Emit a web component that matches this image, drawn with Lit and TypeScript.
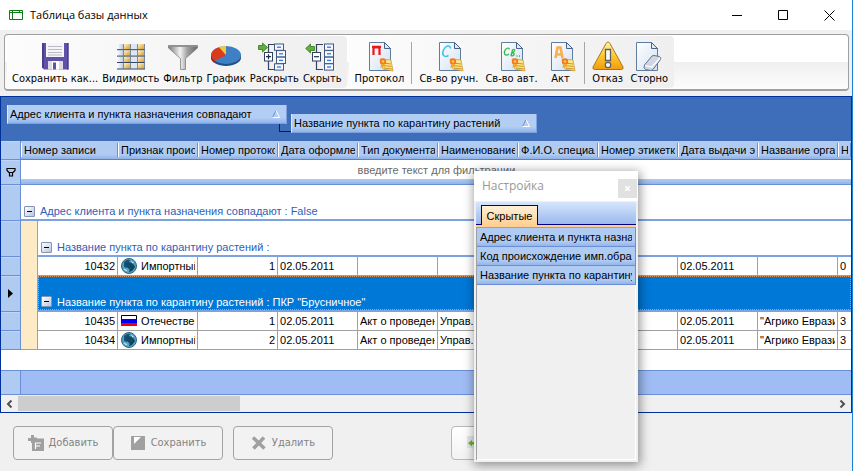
import { LitElement, html, svg, css, nothing } from "lit";
import { customElement, property } from "lit/decorators.js";
import { classMap } from "lit/directives/class-map.js";

const page = svg`<path d="M6.500 2.500H21.500L27.500 8.500V30.500H6.500Z" fill="url(#pg)" stroke="#5f7da0"/><path d="M21.500 2.500V8.500H27.500Z" fill="#dfe9f6" stroke="#4a6488"/>`;
const pageDefs = svg`<defs><linearGradient id="pg" x1="0" y1="0" x2="1" y2="1"><stop offset="0" stop-color="#fff"/><stop offset="1" stop-color="#d3e1f2"/></linearGradient></defs>`;
const seal = svg`<path d="M17 19L28 20L30 31L20 29Z" fill="#ffe88a" stroke="#c89020" stroke-width=".7"/><path d="M20 23L28 24M20 25.500L28.500 26.500M21 28L29 29" stroke="#b87e10" stroke-width=".8"/><circle cx="20" cy="21.500" r="3.200" fill="#f4791f"/><circle cx="20" cy="21.500" r="1.300" fill="#ffc860"/><path d="M18 24L17.500 28L20 26.500L21.500 28V24Z" fill="#f5a623"/>`;

const tree = (cells: number[], open: boolean) => svg`
  <path d="M17 4.500H10.500V12M10.500 21V29.500H17" fill="none" stroke="#33435e" stroke-width="1.200"/>
  ${cells.map((x, i) => svg`<rect x=${x + 0.5} y=${4 + i * 6.6} width="9" height="6.300" fill="#f4f9ff" stroke="#45597c"/><path d=${`M${x + 3} ${7.2 + i * 6.6}h4`} stroke="#2f78e8" stroke-width="1.300"/>`)}
  <rect x="6.500" y="12.500" width="8" height="8.500" fill="#fff" stroke="#33435e"/>
  <path d=${open ? "M8 16.700H13M10.500 14.200V19.200" : "M8 16.700H13"} stroke="#1c2f50" stroke-width="1.200"/>
  ${open
    ? svg`<path d="M.500 5.500H4.500V3L9.500 7.500L4.500 12V9.500H.500Z" fill="#5fb236" stroke="#38761d" stroke-width=".8"/>`
    : svg`<path d="M8.500 6.500H4.500V4L-.300 8.500L4.500 13V10.500H8.500Z" fill="#5fb236" stroke="#38761d" stroke-width=".8"/>`}`;

const icons: Record<string, unknown> = {
  save: svg`<path d="M3 3H29.500V29.500H5L3 27.500Z" fill="#5f52a8"/><path d="M3 3H5V28H3ZM28 3H29.500V29.500H28Z" fill="#493d8c"/><path d="M7 3H25V17H7Z" fill="#f6f6f8"/><path d="M9 6.500H23M9 9.500H23M9 12.500H23M9 15H23" stroke="#b9bcc6"/><path d="M9 21H24V29.500H9Z" fill="#dcdde4"/><path d="M13 21H20V29.500H13Z" fill="#fff"/><path d="M14 22.500H17V29.500H14Z" fill="#5f52a8"/>`,
  grid: svg`<defs><linearGradient id="gb"><stop offset="0" stop-color="#fff"/><stop offset="1" stop-color="#b9cbe4"/></linearGradient><linearGradient id="gy" x1="0" y1="0" x2="1" y2="1"><stop offset="0" stop-color="#fff2c8"/><stop offset="1" stop-color="#d79a26"/></linearGradient></defs>
    ${[0, 1, 2, 3].map((r) => [0, 1, 2, 3].map((c) => svg`<rect x=${2 + c * 7} y=${4 + r * 6.4} width="6.200" height="5.400" fill=${c === 0 ? "url(#gb)" : c === 2 ? "#dde6f3" : "url(#gy)"}/>`))}
    <path d="M2 9.700H30M2 16.100H30M2 22.500H30M2 29H30" stroke="#33435e"/><path d="M8.500 4V29M15.500 4V29M22.500 4V29M29.500 4V29" stroke="#60708c" stroke-width=".8"/>`,
  filter: svg`<defs><linearGradient id="fn"><stop offset="0" stop-color="#777"/><stop offset=".4" stop-color="#f2f2f2"/><stop offset=".65" stop-color="#a0a0a0"/><stop offset="1" stop-color="#666"/></linearGradient></defs><path d="M1.500 5.500H30.500V8L18.500 18.500V29.500H13.500V18.500L1.500 8Z" fill="url(#fn)" stroke="#808080" stroke-width=".8"/><path d="M1.500 6.200H30.500" stroke="#909090" stroke-width="1.500"/>`,
  pie: svg`<path d="M1 15V18C1 22 8 26 16 26S31 22 31 18V15Z" fill="#1f4f88"/><ellipse cx="16" cy="15" rx="15" ry="9" fill="#3f7fc4"/><path d="M16 15L4.500 21C-.5 17 0 10 9 7.200Z" fill="#dc3a1c"/><path d="M16 15L9 7.200Q12 6 16 6Z" fill="#f6c63a"/><path d="M1 15V18Q1.500 21 4.500 23V21Q1 18 1 15Z" fill="#9c2410"/>`,
  expand: tree([16, 18, 18, 16], true),
  collapse: tree([18, 18, 18, 18], false),
  proto: svg`${page}<path d="M10.500 15V7.500H16.500V15M9 6.900H18" fill="none" stroke="#f01414" stroke-width="2.200"/>${seal}`,
  manual: svg`${page}<path d="M17.500 8.500C17 4.500 12.500 5.500 10.500 10C8.500 15 11 18 15.500 15.500" fill="none" stroke="#35c5ea" stroke-width="1.500"/>${seal}`,
  auto: svg`${page}<path d="M14.500 9.500C14 7 10.500 8 9.500 11.500C8.800 15 11.500 16 14 14M16 16L17.500 10Q20 8.500 19.500 11Q18.500 12.500 17 12.500Q20 13 18.800 15Q17.500 16.500 16 15.500M21.500 16H22.500M24 16H25" fill="none" stroke="#2fb84a" stroke-width="1.300"/>${seal}`,
  act: svg`${page}<path d="M10.500 18L12.500 7.500H15.500L17.500 18M11.500 14.500H16.500" fill="none" stroke="#f9b04a" stroke-width="2.600"/>${seal}`,
  warn: svg`<defs><linearGradient id="wr" x1="0" y1="0" x2="0" y2="1"><stop offset="0" stop-color="#fff3b0"/><stop offset=".5" stop-color="#fdc92c"/><stop offset="1" stop-color="#f39a10"/></linearGradient></defs><path d="M16 2Q17.200 2 18 3.500L31 27Q31.500 29.500 29.500 29.500H2.500Q.5 29.500 1 27L14 3.500Q14.800 2 16 2Z" fill="url(#wr)" stroke="#a8781c"/><path d="M13.500 9.500H18.500V20.500H13.500Z" fill="#fafafa" stroke="#5f5f5f" stroke-width="1.300"/><circle cx="16" cy="25" r="2.700" fill="#fafafa" stroke="#5f5f5f" stroke-width="1.200"/>`,
  storno: svg`<path d="M3.500 2.500H18.500L24.500 8.500V30.500H3.500Z" fill="url(#pg)" stroke="#5f7da0"/><path d="M18.500 2.500V8.500H24.500Z" fill="#dfe9f6" stroke="#4a6488"/><path d="M11.500 25L19 16Q20 15.500 21 15.500L26.500 16.500Q28.500 17.500 27.500 19.500L20 29.500Q19 30.500 17.500 30.500L12.500 29.500Q10 28 11.500 25Z" fill="#cfd6e4" stroke="#66738c"/><path d="M12 25.500L19 27L27 18" fill="none" stroke="#fff" stroke-width="1.200"/>`,
};

const gridFont = css`font: 11px/14px "Liberation Sans", Arial, sans-serif;`;

@customElement("tool-button")
class ToolButton extends LitElement {
  @property() icon = "";
  @property() label = "";
  static styles = css`
    :host { display: block; flex: none; }
    button { display: flex; flex-direction: column; align-items: center; min-width: 36px; padding: 0 2px; border: 0; background: none; color: #000; font: 11px/14px "DejaVu Sans Condensed", "Open Sans", sans-serif; white-space: nowrap; }
    svg { width: 32px; height: 32px; display: block; overflow: visible; }
  `;
  render() {
    return html`<button type="button"><svg viewBox="0 0 32 32" aria-hidden="true">${pageDefs}${icons[this.icon]}</svg>${this.label}</button>`;
  }
}

const strips = [
  [[["save", "Сохранить как..."], ["grid", "Видимость"], ["filter", "Фильтр"], ["pie", "График"], ["expand", "Раскрыть"], ["collapse", "Скрыть"]]],
  [[["proto", "Протокол"]], [["manual", "Св-во ручн."], ["auto", "Св-во авт."], ["act", "Акт"]], [["warn", "Отказ"], ["storno", "Сторно"]]],
];

const columns = ["Признак происхождения", "Номер протокола", "Дата оформления", "Тип документа", "Наименование", "Ф.И.О. специалиста", "Номер этикетки", "Дата выдачи этикетки", "Название организации", "Номер"];

type Row = { id: number; origin: "globe" | "flag"; cells: string[] };
const row1: Row = { id: 10432, origin: "globe", cells: ["1", "02.05.2011", "", "", "", "", "02.05.2011", "", "0"] };
const rows2: Row[] = [
  { id: 10435, origin: "flag", cells: ["1", "02.05.2011", "Акт о проведении", "Управ.", "", "", "02.05.2011", "\"Агрико Евразия\"", "3"] },
  { id: 10434, origin: "globe", cells: ["2", "02.05.2011", "Акт о проведении", "Управ.", "", "", "02.05.2011", "\"Агрико Евразия\"", "3"] },
];

const globe = svg`<svg class="mark" viewBox="0 0 16 16" aria-hidden="true"><circle cx="8" cy="8" r="7.500" fill="#4fa3c4" stroke="#33627c"/><path d="M3 4Q6 1 9 2L8 4L10 6L7 7L6 10L3 9Z" fill="#155478"/><path d="M8 8L13 7L14 9L11 13L8 14L9 11Z" fill="#0f3d5c"/><path d="M5 5L12 4L13 9L9 12L6 9Z" fill="#134866"/><path d="M10 2.500L13 5L11 5.500Z" fill="#c9ecf8"/><path d="M3 11L6 13" stroke="#b3e0f0" stroke-width="1.500"/></svg>`;
const flag = svg`<svg class="mark" viewBox="0 0 16 16" aria-hidden="true"><path d="M0 2H16V6H0Z" fill="#fff"/><path d="M0 6H16V10H0Z" fill="#0000f8"/><path d="M0 10H16V13H0Z" fill="#f00000"/><path d="M.5 6V2.500H15.500V6" fill="none" stroke="#000"/></svg>`;

@customElement("data-grid")
class DataGrid extends LitElement {
  static styles = css`
    :host { display: block; border: 1px solid #00309c; background: #fff; ${gridFont} }
    button { font: inherit; color: inherit; padding: 0; border: 0; background: none; }
    .panel { display: flex; align-items: flex-start; gap: 4px; height: 36px; padding: 8px 6px 0; background: #3e6dba; }
    .chip { display: flex; align-items: center; justify-content: space-between; height: 19px; padding: 0 6px 0 2px; background: linear-gradient(#b3cef5 70%, #8fb3ea); border: solid #7ea2dd; border-width: 0 1px 1px 0; border-left: 1px solid #dce9fd; color: #000; }
    .wide { width: 280px; }
    .narrow { width: 246px; margin-top: 9px; }
    .link { align-self: flex-start; width: 12px; height: 8px; margin: 19px -4px 0 -12px; border: solid #001d5c; border-width: 0 0 1px 1px; box-sizing: border-box; }
    .sort { width: 8px; height: 8px; }
    table { width: 100%; border-collapse: separate; border-spacing: 0; table-layout: fixed; }
    th, td { padding: 0; height: 19px; box-sizing: border-box; font-weight: normal; text-align: left; white-space: nowrap; vertical-align: middle; overflow: hidden; }
    .c-sel { width: 20px; }
    .c-ind { width: 17px; }
    .c { width: 80px; }
    .sel { background: #b0cbf2; border: solid #6b8fd6; border-width: 0 1px 1px 0; box-shadow: inset 0 1px #bfd6f8; }
    thead th { background: linear-gradient(#b0cbf2 75%, #8fb2e8); border-bottom: 1px solid #5d80c8; }
    .head { border-left: 1px solid #fff; border-right: 1px solid #6b8fd6; padding: 0 2px; overflow: clip; overflow-clip-margin: content-box; }
    .find { height: 25px; border-bottom: 1px solid #6b8fd6; background: linear-gradient(#fff 19px, #b0cbf2 19px, #94b5ea); vertical-align: top; }
    .find input { display: block; width: 100%; height: 19px; box-sizing: border-box; border: 0; padding: 0 0 0 1px; background: none; text-align: center; font: inherit; }
    .find input::placeholder { color: #6a6a6a; opacity: 1; }
    .funnel { display: block; width: 10px; height: 10px; margin: 0 auto; }
    .group { height: 36px; border-bottom: 2px solid #7da2e0; color: #2f60b8; vertical-align: bottom; }
    .line { display: flex; align-items: center; gap: 5px; padding: 0 0 1px 3px; }
    .fold { width: 11px; height: 11px; box-sizing: border-box; border: 1px solid #8494b4; border-radius: 1px; background: linear-gradient(135deg, #fff, #b9c6e0); display: grid; place-items: center; }
    .fold::before { content: ""; width: 5px; height: 1px; background: #000; }
    .on { color: #fff; background: #0078d7; }
    .on .line { box-sizing: border-box; height: 34px; align-items: flex-end; border: 1px dotted #e39a5c; padding: 0 0 0 2px; }
    .on .fold { margin-bottom: 2px; }
    .ind { background: #fdebc8; border-right: 1px solid #a0a0a0; }
    .cell { border: solid #a0a0a0; border-width: 0 1px 1px 0; }
    .cell:last-child { border-right: 0; }
    .last .ind { border-bottom: 1px solid #a0a0a0; }
    .txt { overflow: hidden; margin: 0 2px; display: flex; align-items: center; gap: 4px; }
    .num { justify-content: flex-end; }
    .mark { width: 16px; height: 16px; flex: none; margin-left: 1px; }
    .arrow { display: block; width: 5px; height: 9px; margin: 0 auto; }
    .rest { height: 20px; }
    .sum { height: 25px; box-sizing: border-box; background: #9fbcf4; border: solid #6b8fd6; border-width: 1px 0; }
    .sum i { display: block; width: 20px; height: 100%; box-sizing: border-box; background: #b0cbf2; border-right: 1px solid #6b8fd6; }
    .scroll { display: flex; align-items: stretch; height: 15px; padding: 1px 0; background: #f0f0f0; }
    .scroll button { width: 17px; display: grid; place-items: center; }
    .scroll svg { width: 7px; height: 8px; }
    .track { flex: 1; }
    .thumb { width: 27.2%; height: 100%; background: #cdcdcd; }
  `;
  private chip(text: string, size: string) {
    return html`<button type="button" class="chip ${size}">${text}<svg class="sort" viewBox="0 0 8 8" aria-hidden="true"><path d="M.5 7.500L4 .5" stroke="#6f92d4"/><path d="M4 .5L7.500 7.500H.5" fill="none" stroke="#fff"/></svg></button>`;
  }
  private group(text: string, level: number, on = false) {
    return html`<tr>
      <td class="sel">${on ? html`<svg class="arrow" viewBox="0 0 5 9" aria-hidden="true"><path d="M0 0L5 4.500L0 9Z"/></svg>` : nothing}</td>
      ${level ? html`<td class="ind"></td>` : nothing}
      <td class=${classMap({ group: true, on })} colspan=${level ? 11 : 12}><div class="line"><button type="button" class="fold" aria-label="Свернуть"></button><span>${text}</span></div></td>
    </tr>`;
  }
  private row(r: Row, last = false) {
    return html`<tr class=${last ? "last" : ""}>
      <td class="sel"></td><td class="ind"></td>
      <td class="cell"><div class="txt num">${r.id}</div></td>
      <td class="cell"><div class="txt">${r.origin === "globe" ? globe : flag}${r.origin === "globe" ? "Импортный" : "Отечественный"}</div></td>
      ${r.cells.map((c, i) => html`<td class="cell"><div class=${classMap({ txt: true, num: i === 0 })}>${c}</div></td>`)}
    </tr>`;
  }
  render() {
    return html`
      <div class="panel">
        ${this.chip("Адрес клиента и пункта назначения совпадают", "wide")}
        <span class="link"></span>
        ${this.chip("Название пункта по карантину растений", "narrow")}
      </div>
      <table>
        <colgroup><col class="c-sel"><col class="c-ind">${[...Array(10)].map(() => html`<col class="c">`)}<col></colgroup>
        <thead>
          <tr><th class="sel"></th><th colspan="2"><div class="head">Номер записи</div></th>${columns.map((c) => html`<th><div class="head">${c}</div></th>`)}</tr>
        </thead>
        <tbody>
          <tr><td class="sel"><svg class="funnel" viewBox="0 0 10 10" aria-hidden="true"><path d="M1 1.500H9V3.500L6.500 6V9H3.500V6L1 3.500Z" fill="none" stroke="#000" stroke-width="1.200"/><path d="M3 5.500H7" stroke="#000"/></svg></td>
            <td class="find" colspan="12"><input aria-label="Фильтр" placeholder="введите текст для фильтрации"></td></tr>
          ${this.group("Адрес клиента и пункта назначения совпадают : False", 0)}
          ${this.group("Название пункта по карантину растений :", 1)}
          ${this.row(row1)}
          ${this.group("Название пункта по карантину растений : ПКР \"Брусничное\"", 1, true)}
          ${rows2.map((r, i) => this.row(r, i === 1))}
        </tbody>
      </table>
      <div class="rest"></div>
      <div class="sum"><i></i></div>
      <div class="scroll">
        <button type="button" aria-label="Влево"><svg viewBox="0 0 7 8"><path d="M5.500 .5L2 4L5.500 7.500" fill="none" stroke="#505050" stroke-width="2"/></svg></button>
        <div class="track"><div class="thumb"></div></div>
        <button type="button" aria-label="Вправо"><svg viewBox="0 0 7 8"><path d="M1.500 .5L5 4L1.500 7.500" fill="none" stroke="#505050" stroke-width="2"/></svg></button>
      </div>`;
  }
}

@customElement("settings-popup")
class SettingsPopup extends LitElement {
  static styles = css`
    :host { display: flex; flex-direction: column; box-sizing: border-box; width: 164px; height: 291px; padding: 0 2px 2px; background: #f0f0f0; box-shadow: 1px 2px 10px 1px rgba(0, 0, 0, .42); ${gridFont} }
    button { font: inherit; padding: 0; }
    header { display: flex; align-items: center; justify-content: space-between; height: 30px; margin: 0 -2px; padding: 0 1px 0 8px; background: #fff; color: #999; font: 12px/16px "Open Sans", sans-serif; }
    .close { width: 19px; height: 19px; margin-top: 4px; border: 0; background: #e1e1e1; display: grid; place-items: center; }
    .close svg { width: 5px; height: 5px; }
    .tabs { display: flex; align-items: flex-end; height: 23px; margin-top: 1px; padding-left: 5px; background: linear-gradient(#d6e5fd, #98b8ec); box-shadow: inset 0 -1px #000080; }
    .tab { width: 57px; height: 20px; border: 1px solid #000080; border-bottom: 0; background: linear-gradient(#fff1d9, #ffcf92); color: #000; }
    .list { flex: 1; margin: 0; padding: 0; border-top: 2px solid #ffcf92; }
    .box { height: 100%; box-sizing: border-box; border: solid #a0a0a0; border-width: 1px 0 0 1px; box-shadow: inset -1px -1px #fff; }
    .item { height: 19px; box-sizing: border-box; padding: 2px 3px 0; background: linear-gradient(#b0cbf2 75%, #94b5ea); border: solid #6b8fd6; border-width: 0 1px 1px 0; color: #000; }
    .item span { display: block; overflow: hidden; white-space: nowrap; }
  `;
  render() {
    return html`
      <header>Настройка<button type="button" class="close" aria-label="Закрыть"><svg viewBox="0 0 5 5"><path d="M0 0L5 5M5 0L0 5" stroke="#fff" stroke-width="1.500"/></svg></button></header>
      <div class="tabs"><button type="button" class="tab">Скрытые</button></div>
      <div class="list"><div class="box">
        ${["Адрес клиента и пункта назначения", "Код происхождение имп.образца", "Название пункта по карантину"].map((t) => html`<div class="item"><span>${t}</span></div>`)}
      </div></div>`;
  }
}

@customElement("app-root")
class AppRoot extends LitElement {
  static styles = css`
    :host { display: block; position: relative; min-height: 100vh; box-sizing: border-box; border-right: 1px solid #1883d7; background: #f0f0f0; overflow: hidden; }
    button { padding: 0; border: 0; background: none; font: 11px/16px "DejaVu Sans Condensed", "Open Sans", sans-serif; }
    .title { display: flex; align-items: center; gap: 7px; height: 30px; padding-left: 9px; background: #fff; font: 11px/16px "Open Sans", sans-serif; color: #000; }
    .logo { width: 14px; height: 10px; }
    .caption { flex: 1; }
    .win { width: 46px; height: 30px; display: grid; place-items: center; }
    .win svg { width: 11px; height: 11px; }
    .bar { display: flex; gap: 2px; height: 57px; box-sizing: border-box; margin: 4px 3px 5px 4px; padding: 1px 2px; border: 1px solid #a0a0a0; border-bottom-width: 2px; border-radius: 4px; background: linear-gradient(#fff 50%, #efefef 50%, #fdfdfd); }
    .strip { display: flex; align-items: center; padding: 2px 4px 0 3px; border-radius: 4px; background: linear-gradient(90deg, #fcfcfc, #efefef); }
    .strip + .strip { gap: 3px; }
    .sep { width: 1px; height: 42px; margin: 0 2px; background: #a6a6a6; }
    .actions { display: flex; gap: 10px; padding: 13px; }
    .pair { display: flex; }
    .act { display: flex; align-items: center; justify-content: center; gap: 5px; width: 100px; height: 34px; box-sizing: border-box; border: 1px solid #a3a3a3; border-radius: 4px; background: #f2f2f2; color: #838383; }
    .big { width: 110px; }
    .act svg { width: 16px; height: 16px; }
    .go { margin-left: 108px; background: linear-gradient(#fff, #f2f2f2); border-color: #b8b8b8; justify-content: flex-start; padding-left: 14px; }
    settings-popup { position: absolute; left: 474px; top: 171px; }
  `;
  render() {
    return html`
      <div class="title">
        <svg class="logo" viewBox="0 0 14 10" aria-hidden="true"><path d="M.5 .5H13.500V9.500H.5ZM.5 2.500H13.500M3.500 .5V9.500M10.500 .5V3" fill="none" stroke="#0a7d14"/></svg>
        <span class="caption">Таблица базы данных</span>
        <div class="pair">
          <button type="button" class="win" aria-label="Свернуть"><svg viewBox="0 0 11 11"><path d="M0 5.500H10" stroke="#000"/></svg></button>
          <button type="button" class="win" aria-label="Развернуть"><svg viewBox="0 0 11 11"><path d="M.5 .5H9.500V9.500H.5Z" fill="none" stroke="#000"/></svg></button>
          <button type="button" class="win" aria-label="Закрыть"><svg viewBox="0 0 11 11"><path d="M.5 .5L10.500 10.500M10.500 .5L.5 10.500" stroke="#000"/></svg></button>
        </div>
      </div>
      <div class="bar">
        ${strips.map((s) => html`<div class="strip">${s.map((g, i) => html`${i ? html`<span class="sep"></span>` : nothing}${g.map(([icon, label]) => html`<tool-button icon=${icon} label=${label}></tool-button>`)}`)}</div>`)}
      </div>
      <data-grid></data-grid>
      <div class="actions">
        <div class="pair">
          <button type="button" class="act" disabled><svg viewBox="0 0 16 16"><path d="M3 0H6V2.500H9V3.500H16V16H4V8H3V6H0V3H3Z" fill="#a0a0a0"/><path d="M7.500 14V8H13M7.500 11H12" fill="none" stroke="#fff" stroke-width="1.200"/></svg>Добавить</button>
          <button type="button" class="act big" disabled><svg viewBox="0 0 16 16"><path d="M1 1H15V15H1Z" fill="#a0a0a0"/><path d="M4 2H11L4 9Z" fill="#fff"/></svg>Сохранить</button>
        </div>
        <button type="button" class="act" disabled><svg viewBox="0 0 16 16"><path d="M2 2.500L13.500 13.500M13 2.500L2.500 13.500" stroke="#a0a0a0" stroke-width="3.500"/></svg>Удалить</button>
        <button type="button" class="act go" aria-label="Назад"><svg viewBox="0 0 16 16"><path d="M1 1H15V15H7V13H1Z" fill="#e3e6e8"/><path d="M2 8L6 5V7H12V9.500H6V11.500Z" fill="#6cb52c"/></svg></button>
      </div>
      <settings-popup></settings-popup>`;
  }
}
